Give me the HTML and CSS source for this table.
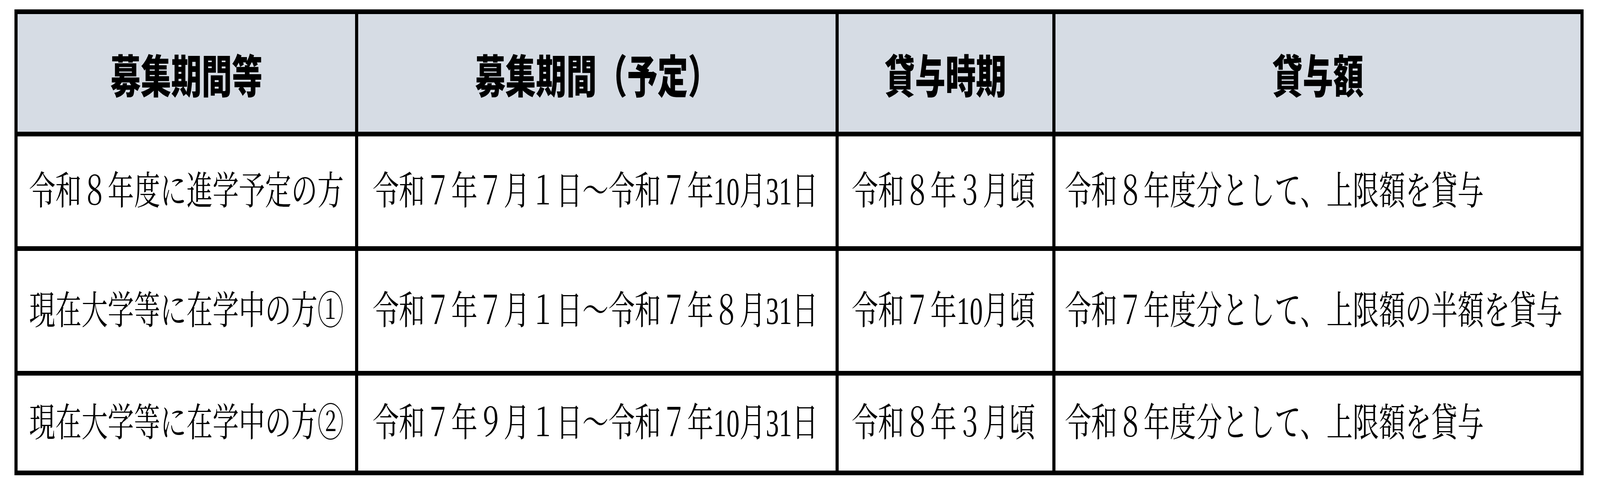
FILE: index.html
```html
<!DOCTYPE html>
<html lang="ja">
<head>
<meta charset="utf-8">
<title>募集期間等</title>
<link rel="stylesheet" href="styles.css">
</head>
<body>
<div class="sheet">
  <div class="cell head"><span class="txt">募集期間等</span></div>
  <div class="cell head"><span class="txt">募集期間（予定）</span></div>
  <div class="cell head"><span class="txt">貸与時期</span></div>
  <div class="cell head"><span class="txt">貸与額</span></div>

  <div class="cell col1"><span class="txt">令和８年度に進学予定の方</span></div>
  <div class="cell col2"><span class="txt">令和７年７月１日～令和７年10月31日</span></div>
  <div class="cell col3"><span class="txt">令和８年３月頃</span></div>
  <div class="cell col4"><span class="txt">令和８年度分として、上限額を貸与</span></div>

  <div class="cell col1"><span class="txt">現在大学等に在学中の方①</span></div>
  <div class="cell col2"><span class="txt">令和７年７月１日～令和７年８月31日</span></div>
  <div class="cell col3"><span class="txt">令和７年10月頃</span></div>
  <div class="cell col4"><span class="txt">令和７年度分として、上限額の半額を貸与</span></div>

  <div class="cell col1"><span class="txt">現在大学等に在学中の方②</span></div>
  <div class="cell col2"><span class="txt">令和７年９月１日～令和７年10月31日</span></div>
  <div class="cell col3"><span class="txt">令和８年３月頃</span></div>
  <div class="cell col4"><span class="txt">令和８年度分として、上限額を貸与</span></div>
</div>
</body>
</html>
```
FILE: styles.css
```css
:root {
  --kx: 1;
}

/* the window may be narrower than the 6104px design: squeeze horizontally */
@media (max-width: 5500px) {
  :root {
    --kx: 0.67104;
  }
}

html, body {
  margin: 0;
  padding: 0;
  background: #ffffff;
}

body {
  padding: 24px 0 0 calc(55px * var(--kx));
}

.sheet {
  display: grid;
  grid-template-columns:
    calc(1288px * var(--kx))
    calc(1820px * var(--kx))
    calc(815px * var(--kx))
    calc(2003px * var(--kx));
  grid-template-rows: 301px 281px 307px 243px;
  column-gap: calc(12px * var(--kx));
  row-gap: 12px;
  padding: 12px calc(12px * var(--kx));
  background: #000000;
  width: max-content;
}

.cell {
  display: flex;
  align-items: center;
  min-width: 0;
  overflow: hidden;
  background: #ffffff;
}

.txt {
  flex: none;
  display: block;
  box-sizing: border-box;
  width: calc(100% / var(--kx));
  transform: scaleX(var(--kx));
  transform-origin: 0 50%;
  color: #000000;
  font-family: "Liberation Serif", "Noto Serif CJK JP", "Noto Sans CJK JP", serif;
  font-size: 100px;
  line-height: 1;
  white-space: nowrap;
  text-align: left;
}

.head {
  background: #d6dce4;
}

.head .txt {
  text-align: center;
  font-family: "Noto Sans CJK JP", sans-serif;
  font-weight: 900;
  font-size: 116px;
}

.col1 .txt {
  padding-left: 44px;
}

.col2 .txt {
  padding-left: 55px;
}

.col3 .txt {
  padding-left: 50px;
}

.col4 .txt {
  padding-left: 36px;
}
```
